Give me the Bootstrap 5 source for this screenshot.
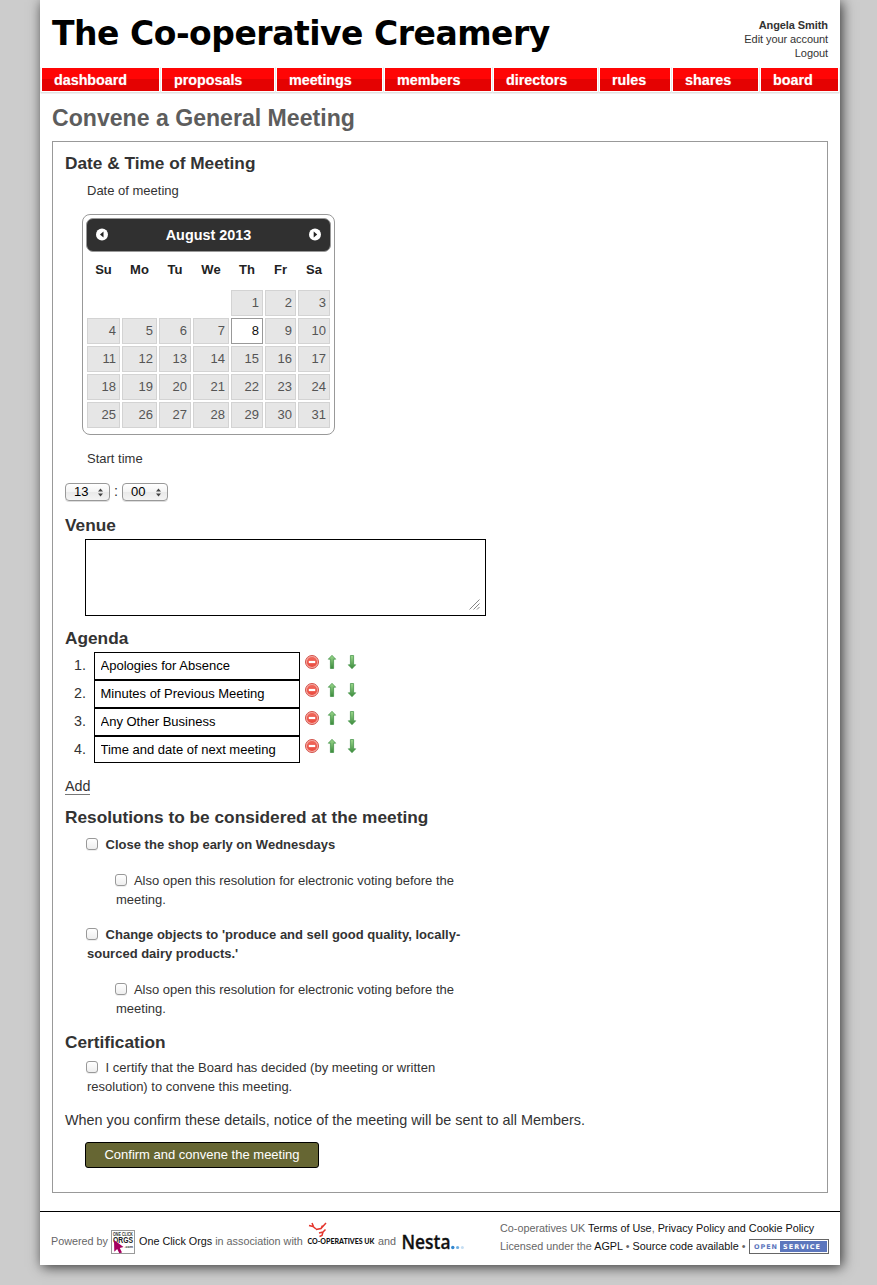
<!DOCTYPE html>
<html lang="en">
<head>
<meta charset="utf-8">
<title>Convene a General Meeting</title>
<link rel="stylesheet" href="https://cdn.jsdelivr.net/npm/bootstrap@5.3.0/dist/css/bootstrap.min.css">
<style>
body{background:#ccc;color:#333;font-family:"Liberation Sans",Arial,sans-serif;font-size:13px;line-height:20px;padding-bottom:20px}
a{color:inherit;text-decoration:none}
.sheet{width:800px;height:1265px;margin-left:40px;box-shadow:2px 2px 12px rgba(0,0,0,.75)}
.site-head{height:68px;padding:0 12px}
.site-title{font:bold 33px/40px "DejaVu Sans",Verdana,sans-serif;color:#000;letter-spacing:-.48px;margin:14px 0 0;white-space:nowrap}
.account{font-size:11px;line-height:14px;margin-top:18px;letter-spacing:-.08px}
.tabs{height:23px;gap:3px;padding:0 2px}
.tabs a{height:23px;padding-left:12px;font-weight:bold;font-size:14.3px;line-height:24px;color:#fff;background:linear-gradient(#ff0505 0,#ff0505 11px,#e40202 11px);box-shadow:0 0 0 1px #fff,0 1px 0 1.5px #e2e2e2;text-shadow:0 0 1px rgba(255,255,255,.5)}
.page-title{font-size:23.1px;line-height:28px;font-weight:bold;color:#5d5d5d;margin:13px 0 9px 12px}
.panel{width:776px;height:1052px;margin-left:12px;border:1px solid #999;padding-left:12px}
.panel h2{font-size:17.25px;line-height:22px;font-weight:bold;margin:0}
.indent{margin-left:22px}
.cal{width:253px;height:221px;margin:13px 0 14px 17px;border:1px solid #999;border-radius:8px;padding:3px}
.cal-head{height:34px;background:#303030;border:1px solid #999;border-radius:7px;color:#fff;font-weight:bold;font-size:14.4px;padding:0 9px}
.cal-head svg{margin-top:-1px}
.cal-grid{display:grid;grid-template-columns:33px 35px 32px 36px 32px 31px 32px;gap:2px;margin-left:1px}
.cal-names{height:20px;margin-top:8px;margin-bottom:10px;font-weight:bold;color:#222;text-align:center}
.cal-grid .day{height:26px;border:1px solid #d3d3d3;background:#e6e6e6;color:#555;text-align:right;padding-right:3px;line-height:23px}
.cal-grid .today{background:#fff;border-color:#999;color:#111}
.first{grid-column:5}
.pick{height:18px;border:1px solid #999;border-radius:4px;background:linear-gradient(#fff,#f3f3f3 50%,#e9e9e9 51%,#f4f4f4);color:#000;padding:0 5px 0 8px;line-height:15px;box-shadow:0 1px 0 #ddd}
.pick span{margin-top:-2px}
.venue{display:block;width:401px;height:77px;margin:3px 0 11px 20px;border:1px solid #000;position:relative}
.venue svg{position:absolute;right:5px;bottom:5px}
.agenda{margin:3px 0 0}
.agenda li{height:28px}
.agenda .num{width:21px;margin-right:8px;text-align:right;font-size:14.3px;line-height:27px}
.agenda input{width:206px;height:28px;border:1px solid #000;padding:0 5.5px 2px;font-size:13px;color:#000;border-radius:0}
.agenda li:last-child input{height:27px;padding-bottom:0}
.agenda svg{margin-top:2px;margin-left:4px}
.add{display:inline-block;font-size:14.3px;line-height:15px;border-bottom:1px solid #777;margin-top:15px;margin-bottom:11px}
.opt{line-height:18.5px;width:384px}
.opt.sub{margin-left:51px;width:355px}
.opt i{display:inline-block;width:12px;height:12px;margin:0 4px 0 -1px;border:1px solid #999;border-radius:3px;background:linear-gradient(#fff,#eee);vertical-align:-1px;box-shadow:0 1px 0 #eee}
.confirm{width:234px;height:26px;margin:12px 0 0 20px;background:#663;border:1px solid #000;border-radius:3px;color:#fff;font-size:13px;line-height:22px;padding:0 0 1px;display:block}
.foot{border-top:1px solid #000;margin-top:18px;height:54px;font-size:10.8px;color:#666;white-space:nowrap}
.foot a{color:#111}
.powered{width:460px;padding:8px 0 0 11px}
.powered svg{overflow:visible}
.legal{line-height:18px;padding-top:7px}
.open{display:inline-flex;width:80px;height:15px;margin-left:1px;border:1px solid #666;padding:1px;vertical-align:-2px;background:#fff}
</style>
</head>
<body>
<svg width="0" height="0" class="position-absolute">
<defs>
<linearGradient id="gr" x2="0" y2="1"><stop stop-color="#9bd88c"/><stop offset="1" stop-color="#3b8a3b"/></linearGradient>
<linearGradient id="rd" x2="0" y2="1"><stop stop-color="#f0685c"/><stop offset="1" stop-color="#ea4a3e"/></linearGradient>
<symbol id="acts" viewBox="0 0 54 18">
<circle cx="8" cy="8" r="6.5" fill="#f7aaa3" stroke="#d2534b"/><circle cx="8" cy="8" r="5.1" fill="url(#rd)"/><rect x="4.8" y="6.9" width="6.4" height="2.2" fill="#fff"/>
<path d="M28 1.3 31.7 5.2H29.6V14.5H26.4V5.2H24.3Z" fill="url(#gr)" stroke="#3c8f42" stroke-width=".7"/>
<path d="M48 14.7 44.3 10.8H46.4V1.5H49.6V10.8H51.7Z" fill="url(#gr)" stroke="#3c8f42" stroke-width=".7"/>
</symbol>
</defs>
</svg>
<main class="sheet bg-white">
<header class="site-head d-flex justify-content-between">
<h1 class="site-title">The Co-operative Creamery</h1>
<div class="account text-end"><b>Angela Smith</b><br><a href="#">Edit your account</a><br><a href="#">Logout</a></div>
</header>
<nav class="tabs d-flex">
<a href="#" style="width:117px">dashboard</a><a href="#" style="width:112px">proposals</a><a href="#" style="width:105px">meetings</a><a href="#" style="width:106px">members</a><a href="#" style="width:103px">directors</a><a href="#" style="width:70px">rules</a><a href="#" style="width:85px">shares</a><a href="#" style="width:77px">board</a>
</nav>
<h1 class="page-title">Convene a General Meeting</h1>
<section class="panel">
<h2 style="margin-top:10px">Date &amp; Time of Meeting</h2>
<div class="indent" style="margin-top:7px;margin-bottom:13px">Date of meeting</div>
<div class="cal">
<div class="cal-head d-flex justify-content-between align-items-center">
<svg width="13" height="13" viewBox="0 0 13 13"><circle cx="6" cy="6.5" r="6" fill="#fff"/><path d="M7.5 3.5V9.5L4 6.5Z" fill="#222"/></svg>
<span>August 2013</span>
<svg width="13" height="13" viewBox="0 0 13 13"><circle cx="7" cy="6.5" r="6" fill="#fff"/><path d="M5.7 3.5V9.5L9.2 6.5Z" fill="#222"/></svg>
</div>
<div class="cal-grid cal-names"><span>Su</span><span>Mo</span><span>Tu</span><span>We</span><span>Th</span><span>Fr</span><span>Sa</span></div>
<div class="cal-grid">
<a class="day first">1</a><a class="day">2</a><a class="day">3</a>
<a class="day">4</a><a class="day">5</a><a class="day">6</a><a class="day">7</a><a class="day today">8</a><a class="day">9</a><a class="day">10</a>
<a class="day">11</a><a class="day">12</a><a class="day">13</a><a class="day">14</a><a class="day">15</a><a class="day">16</a><a class="day">17</a>
<a class="day">18</a><a class="day">19</a><a class="day">20</a><a class="day">21</a><a class="day">22</a><a class="day">23</a><a class="day">24</a>
<a class="day">25</a><a class="day">26</a><a class="day">27</a><a class="day">28</a><a class="day">29</a><a class="day">30</a><a class="day">31</a>
</div>
</div>
<div class="indent">Start time</div>
<div class="d-flex" style="margin-top:14px">
<span class="pick d-flex justify-content-between align-items-center" style="width:45px"><span>13</span><svg width="7" height="9" viewBox="0 0 7 9"><path d="M1 3.5 3.5.5 6 3.5ZM1 5.5 3.5 8.5 6 5.5Z" fill="#444"/></svg></span>
<span class="text-center" style="width:12px;line-height:17px;font-size:14.3px">:</span>
<span class="pick d-flex justify-content-between align-items-center" style="width:46px"><span>00</span><svg width="7" height="9" viewBox="0 0 7 9"><path d="M1 3.5 3.5.5 6 3.5ZM1 5.5 3.5 8.5 6 5.5Z" fill="#444"/></svg></span>
</div>
<h2 style="margin-top:13px">Venue</h2>
<div class="venue"><svg width="11" height="11" viewBox="0 0 11 11"><path d="M.5 10.5 10.5.5M4.5 10.5 10.5 4.5M8 10.5 10.5 8" stroke="#777" stroke-width=".9"/></svg></div>
<h2>Agenda</h2>
<ol class="agenda list-unstyled">
<li class="d-flex"><span class="num">1.</span><input value="Apologies for Absence"><svg width="54" height="18"><use href="#acts"/></svg></li>
<li class="d-flex"><span class="num">2.</span><input value="Minutes of Previous Meeting"><svg width="54" height="18"><use href="#acts"/></svg></li>
<li class="d-flex"><span class="num">3.</span><input value="Any Other Business"><svg width="54" height="18"><use href="#acts"/></svg></li>
<li class="d-flex"><span class="num">4.</span><input value="Time and date of next meeting"><svg width="54" height="18"><use href="#acts"/></svg></li>
</ol>
<div class="d-flex"><a class="add" href="#">Add</a></div>
<h2>Resolutions to be considered at the meeting</h2>
<div class="opt indent fw-bold" style="margin-top:8px"><i></i> Close the shop early on Wednesdays</div>
<div class="opt sub" style="margin-top:17.5px"><i></i> Also open this resolution for electronic voting before the meeting.</div>
<div class="opt indent fw-bold" style="margin-top:17px"><i></i> Change objects to 'produce and sell good quality, locally-sourced dairy products.'</div>
<div class="opt sub" style="margin-top:18px"><i></i> Also open this resolution for electronic voting before the meeting.</div>
<h2 style="margin-top:12.5px">Certification</h2>
<div class="opt indent" style="margin-top:6.5px"><i></i> I certify that the Board has decided (by meeting or written resolution) to convene this meeting.</div>
<div style="font-size:14.4px;margin-top:14px">When you confirm these details, notice of the meeting will be sent to all Members.</div>
<button class="confirm">Confirm and convene the meeting</button>
</section>
<footer class="foot d-flex">
<div class="powered d-flex">
<span style="line-height:42px;width:60px">Powered by</span>
<svg width="24" height="24" viewBox="0 0 24 24" style="margin-top:10px"><rect x=".5" y=".5" width="23" height="23" fill="#fff" stroke="#999"/><text x="2" y="6" font-size="5" font-weight="bold" textLength="20" lengthAdjust="spacingAndGlyphs" fill="#333">ONE CLICK</text><text x="2" y="13.4" font-size="8.5" font-weight="bold" textLength="20" lengthAdjust="spacingAndGlyphs" fill="#222">ORGS</text><text x="13.5" y="18" font-size="3.6" font-weight="bold" textLength="8.5" lengthAdjust="spacingAndGlyphs" fill="#333">.com</text><path d="M3 10 12.5 17 8.8 18 11 22.5 8.3 23.3 6.2 19 3.3 21.7Z" fill="#a6005f"/></svg>
<span style="line-height:42px;margin-left:4px;width:168px"><a href="#">One Click Orgs</a> in association with</span>
<svg width="70" height="30" viewBox="0 0 70 30"><path d="M2 5.500 6 6.500 9 9M5 3 6.500 6.500M9 9.500 14 8.500 15.500 5.500M14 8.500 19 3M12 13 16 12 18.500 9.500M16 12 15 15.500 12.500 16.500" fill="none" stroke="#e5352c" stroke-width="1.5"/><text x=".5" y="23.5" font-family="Lato" font-weight="900" font-size="6.6" textLength="67" lengthAdjust="spacingAndGlyphs" fill="#111">CO-OPERATIVES UK</text></svg>
<span style="line-height:42px;margin-left:1px;width:24px">and</span>
<svg width="64" height="34" viewBox="0 0 64 34"><text x="-.5" y="29" font-family="Open Sans" font-weight="600" font-size="19.5" textLength="49" lengthAdjust="spacingAndGlyphs" fill="#111" stroke="#111" stroke-width=".3">Nesta</text><circle cx="50.8" cy="27.5" r="1.7" fill="#3387cf"/><circle cx="55.6" cy="27.5" r="1.6" fill="#6fb0e4"/><circle cx="60.4" cy="27.5" r="1.5" fill="#c5def3"/></svg>
</div>
<div class="legal">Co-operatives UK <a href="#">Terms of Use</a>, <a href="#">Privacy Policy and</a> <a href="#">Cookie Policy</a><br>Licensed under the <a href="#">AGPL</a> • <a href="#">Source code available</a> • <span class="open"><svg width="76" height="11" viewBox="0 0 76 11"><rect x="29" width="47" height="11" fill="#5c76bd"/><g font-family="DejaVu Sans" font-size="6.5" font-weight="bold"><text x="3" y="8" textLength="23" fill="#5c76bd">OPEN</text><text x="32" y="8" textLength="37" fill="#fff">SERVICE</text></g></svg></span></div>
</footer>
</main>
<script src="https://cdn.jsdelivr.net/npm/bootstrap@5.3.0/dist/js/bootstrap.bundle.min.js"></script>
</body>
</html>
